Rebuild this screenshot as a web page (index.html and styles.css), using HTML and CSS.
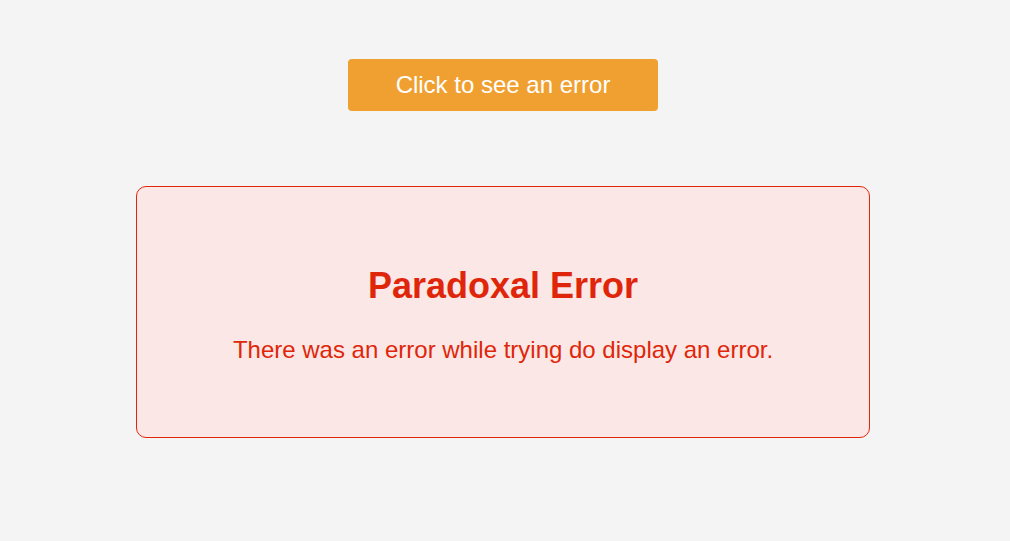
FILE: index.html
```html
<!DOCTYPE html>
<html>
<head>
<meta charset="utf-8">
<link rel="stylesheet" href="styles.css">
</head>
<body>
<main class="page">
  <button class="trigger">Click to see an error</button>
  <section class="error-box">
    <h1 class="error-title">Paradoxal Error</h1>
    <p class="error-text">There was an error while trying do display an error.</p>
  </section>
</main>
</body>
</html>
```
FILE: styles.css
```css
html, body {
  margin: 0;
  padding: 0;
  background: #f4f4f4;
  font-family: "Liberation Sans", Arial, sans-serif;
}
.page {
  width: 1006px;
  padding-top: 59px;
  display: flex;
  flex-direction: column;
  align-items: center;
  gap: 75px;
}
.trigger {
  width: 310px;
  height: 52px;
  background: #f0a030;
  color: #fff;
  border: none;
  border-radius: 4px;
  font-family: "Liberation Sans", Arial, sans-serif;
  font-size: 24px;
  padding: 0;
}
.error-box {
  box-sizing: border-box;
  width: 734px;
  height: 252px;
  padding-top: 6px;
  border: 1px solid #e0260a;
  border-radius: 10px;
  background: #fbe8e6;
  color: #e0260a;
  display: flex;
  flex-direction: column;
  align-items: center;
  justify-content: center;
  text-align: center;
}
.error-title {
  margin: 0 0 30px;
  font-size: 36px;
  line-height: 40px;
  font-weight: bold;
}
.error-text {
  margin: 0;
  font-size: 24px;
  line-height: 28px;
}
```
